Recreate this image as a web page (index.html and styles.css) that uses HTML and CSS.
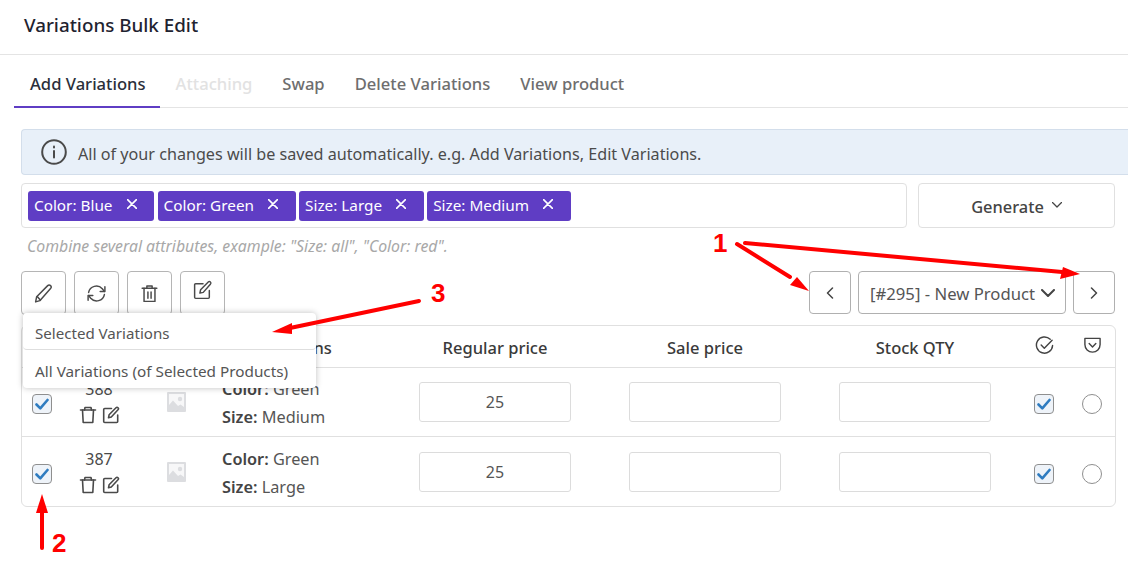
FILE: index.html
```html
<!DOCTYPE html>
<html lang="en">
<head>
<meta charset="utf-8">
<title>Variations Bulk Edit</title>
<link rel="stylesheet" href="styles.css">
</head>
<body>
<div class="page">
  <header class="title-bar"><h1>Variations Bulk Edit</h1></header>
  <nav class="tabs">
    <a class="tab active">Add Variations</a>
    <a class="tab disabled">Attaching</a>
    <a class="tab">Swap</a>
    <a class="tab">Delete Variations</a>
    <a class="tab">View product</a>
  </nav>
  <main class="content">
    <div class="notice">
      <svg class="notice-icon" viewBox="0 0 26 26"><circle cx="13" cy="13" r="11.800"/><path d="M13 12v6.500"/><path d="M13 7.500v1"/></svg>
      <span>All of your changes will be saved automatically. e.g. Add Variations, Edit Variations.</span>
    </div>
    <div class="generate-row">
      <div class="tag-input">
        <span class="tag">Color: Blue<svg viewBox="0 0 10 10"><path d="M0.5 0.5l9 9M9.500 0.5l-9 9"/></svg></span>
        <span class="tag">Color: Green<svg viewBox="0 0 10 10"><path d="M0.5 0.5l9 9M9.500 0.5l-9 9"/></svg></span>
        <span class="tag">Size: Large<svg viewBox="0 0 10 10"><path d="M0.5 0.5l9 9M9.500 0.5l-9 9"/></svg></span>
        <span class="tag">Size: Medium<svg viewBox="0 0 10 10"><path d="M0.5 0.5l9 9M9.500 0.5l-9 9"/></svg></span>
      </div>
      <button class="generate">Generate<svg viewBox="0 0 10 6"><path d="M0.500 0.500l4.500 4.500 4.500-4.500"/></svg></button>
    </div>
    <p class="hint">Combine several attributes, example: "Size: all", "Color: red".</p>
    <div class="toolbar">
      <div class="tools">
        <button class="tool"><svg viewBox="0 0 20 20"><path d="M2.500 18l1-5L14 2.500q1.300-1.300 2.700 0t0 2.700L6.500 16.800z"/><path d="M4 12.800l3 3.300"/></svg></button>
        <button class="tool"><svg viewBox="0 0 20 20"><path d="M2.500 9a7.500 7.500 0 0 1 13-3.500L17.500 8"/><path d="M18 3.500V8h-4.500"/><path d="M17.500 11a7.500 7.500 0 0 1-13 3.500L2.500 12"/><path d="M2 16.500V12h4.500"/></svg></button>
        <button class="tool"><svg viewBox="0 0 20 20"><path d="M3 5h14"/><path d="M7.500 5V2.800h5V5"/><path d="M4.800 5v12.500h10.400V5"/><path d="M8.500 8.500v6M11.500 8.500v6"/></svg></button>
        <button class="tool raised"><svg viewBox="0 0 20 20"><path d="M10.500 3.500H3.500a1 1 0 0 0-1 1v12a1 1 0 0 0 1 1h12a1 1 0 0 0 1-1V10"/><path d="M7.500 12.500l.7-3.200L15.500 2q1-1 2 0t0 2L10.700 11.800z"/></svg></button>
      </div>
      <div class="pager">
        <button class="page-btn"><svg viewBox="0 0 8 12"><path d="M6.500 1L1.500 6l5 5"/></svg></button>
        <button class="product-select">[#295] - New Product<svg viewBox="0 0 14 8"><path d="M1 1l6 6 6-6"/></svg></button>
        <button class="page-btn"><svg viewBox="0 0 8 12"><path d="M1.500 1l5 5-5 5"/></svg></button>
      </div>
    </div>
    <div class="table-wrap">
      <table class="grid">
        <colgroup>
          <col class="c-check"><col class="c-id"><col class="c-img"><col class="c-attr"><col class="c-price"><col class="c-sale"><col class="c-stock"><col class="c-on"><col class="c-def">
        </colgroup>
        <thead>
          <tr>
            <th></th><th></th><th></th>
            <th class="left">Combinations</th>
            <th>Regular price</th>
            <th>Sale price</th>
            <th>Stock QTY</th>
            <th><svg class="head-icon" viewBox="0 0 20 20"><path d="M16 3.500A8.500 8.500 0 1 0 18.500 10"/><path d="M6.500 9.500l3.300 3.300L18 4.500"/></svg></th>
            <th><svg class="head-icon" viewBox="0 0 20 20"><path d="M2 2.500h16V9a8 8 0 0 1-16 0z"/><path d="M6.500 8l3.500 3.500L13.500 8"/></svg></th>
          </tr>
        </thead>
        <tbody>
          <tr>
            <td><span class="check"><svg viewBox="0 0 14 12"><path d="M1.500 6.500l3.800 3.800L12.500 2"/></svg></span></td>
            <td class="id-cell">388<span class="row-icons"><svg viewBox="0 0 18 18"><path d="M1.500 4h15"/><path d="M5.500 4l.5-2.500h6L12.500 4"/><path d="M3.500 4l.7 12.500h9.600L14.500 4"/></svg><svg viewBox="0 0 18 18"><path d="M9.500 2.500H2.700a1 1 0 0 0-1 1v12a1 1 0 0 0 1 1h12a1 1 0 0 0 1-1V9"/><path d="M6.500 11.800l.6-3L14 1.800q1-1 2 0t0 2L9.300 11z"/></svg></span></td>
            <td class="img-cell"><svg class="ph" viewBox="0 0 19 20"><rect class="ph-frame" width="19" height="20" rx="1"/><rect class="ph-sky" x="2" y="2" width="15" height="16"/><circle class="ph-art" cx="13" cy="7" r="2.200"/><path class="ph-art" d="M2 18v-5l4-4.500 5 5.500 2.500-1.500 3.500 2.500V18z"/></svg></td>
            <td class="attr"><div><b>Color:</b> Green</div><div><b>Size:</b> Medium</div></td>
            <td><input class="field" type="text" value="25" readonly></td>
            <td><input class="field" type="text" readonly></td>
            <td><input class="field" type="text" readonly></td>
            <td><span class="check"><svg viewBox="0 0 14 12"><path d="M1.500 6.500l3.800 3.800L12.500 2"/></svg></span></td>
            <td><span class="radio"></span></td>
          </tr>
          <tr>
            <td><span class="check"><svg viewBox="0 0 14 12"><path d="M1.500 6.500l3.800 3.800L12.500 2"/></svg></span></td>
            <td class="id-cell">387<span class="row-icons"><svg viewBox="0 0 18 18"><path d="M1.500 4h15"/><path d="M5.500 4l.5-2.500h6L12.500 4"/><path d="M3.500 4l.7 12.500h9.600L14.500 4"/></svg><svg viewBox="0 0 18 18"><path d="M9.500 2.500H2.700a1 1 0 0 0-1 1v12a1 1 0 0 0 1 1h12a1 1 0 0 0 1-1V9"/><path d="M6.500 11.800l.6-3L14 1.800q1-1 2 0t0 2L9.300 11z"/></svg></span></td>
            <td class="img-cell"><svg class="ph" viewBox="0 0 19 20"><rect class="ph-frame" width="19" height="20" rx="1"/><rect class="ph-sky" x="2" y="2" width="15" height="16"/><circle class="ph-art" cx="13" cy="7" r="2.200"/><path class="ph-art" d="M2 18v-5l4-4.500 5 5.500 2.500-1.500 3.500 2.500V18z"/></svg></td>
            <td class="attr"><div><b>Color:</b> Green</div><div><b>Size:</b> Large</div></td>
            <td><input class="field" type="text" value="25" readonly></td>
            <td><input class="field" type="text" readonly></td>
            <td><input class="field" type="text" readonly></td>
            <td><span class="check"><svg viewBox="0 0 14 12"><path d="M1.500 6.500l3.800 3.800L12.500 2"/></svg></span></td>
            <td><span class="radio"></span></td>
          </tr>
        </tbody>
      </table>
    </div>
  </main>

  <ul class="menu">
    <li>Selected Variations</li>
    <li>All Variations (of Selected Products)</li>
  </ul>

  <svg class="marks" viewBox="0 0 1128 565">
    <path class="shaft" d="M737 244L790 277"/>
    <path class="head" d="M809 291L790 285 797 277z"/>
    <path class="shaft" d="M745 243L1062 272"/>
    <path class="head" d="M1080 274L1060 279 1063 267z"/>
    <path class="shaft" d="M419 301L290 328"/>
    <path class="head" d="M272 332L292 323 292 334z"/>
    <path class="shaft" d="M42 548V508"/>
    <path class="head" d="M42 494L48 513H36z"/>
  </svg>
  <span class="num n1">1</span>
  <span class="num n2">2</span>
  <span class="num n3">3</span>
</div>
</body>
</html>
```
FILE: styles.css
```css
* { box-sizing: border-box; }
html, body { margin: 0; padding: 0; background: #fff; }
body { font-family: "Noto Sans", "Open Sans", sans-serif; color: #444; font-size: 16px; }
.page { position: relative; width: 1128px; height: 565px; overflow: hidden; }
svg { fill: none; stroke: currentColor; stroke-linecap: round; stroke-linejoin: round; }

.title-bar { height: 55px; border-bottom: 1px solid #e4e4e4; padding-left: 24px; display: flex; align-items: center; }
.title-bar h1 { margin: 0 0 5px; font-size: 18.8px; font-weight: 500; color: #1f2330; }

.tabs { height: 53px; margin-left: 14px; border-bottom: 1px solid #e4e4e4; display: flex; }
.tab { padding: 0 15px; line-height: 58px; height: 53px; font-weight: 500; font-size: 16.6px; color: #6e6e6e; white-space: nowrap; }
.tab.active { color: #2b2f3a; border-bottom: 2px solid #5f3dc4; padding: 0 14px 0 16px; margin-right: 1px; }
.tab.disabled { color: #e2e2e2; }

.content { padding: 21px 13px 0 21px; }
.notice { height: 46px; width: 1107px; background: #e8f0f9; border: 1px solid #d3deeb; border-right: 0; border-radius: 4px 0 0 4px; display: flex; align-items: center; padding-left: 19px; gap: 11px; font-size: 16.15px; color: #4b4b4b; }
.notice span { padding-top: 3px; }
.notice-icon { width: 26px; height: 26px; stroke-width: 2; color: #4a4a4a; flex: none; }

.generate-row { display: flex; gap: 11px; margin-top: 8px; width: 1094px; }
.tag-input { width: 886px; height: 45px; border: 1px solid #e0e0e0; border-radius: 4px; padding: 7px 6px; display: flex; gap: 3.5px; }
.tag { height: 30px; background: #5f3dc4; color: #fff; border-radius: 3px; display: inline-flex; align-items: center; padding: 0 0 3px 6px; font-size: 15.300px; gap: 14px; white-space: nowrap; }
.tag svg { width: 10px; height: 10px; stroke-width: 1.6; margin: 0 17.6px 1px 0; color: #fff; }
.generate { flex: 1; height: 45px; background: #fff; border: 1px solid #e0e0e0; border-radius: 4px; font: 500 16.4px "Noto Sans", sans-serif; color: #444; display: flex; align-items: center; justify-content: center; gap: 8px; padding: 2px 0 0; }
.generate svg { width: 10px; height: 6px; stroke-width: 1.3; margin-bottom: 4px; }

.hint { margin: 8px 0 0 6px; height: 20px; line-height: 20px; font-size: 15.8px; font-style: italic; color: #a8a8a8; white-space: nowrap; }

.toolbar { display: flex; justify-content: space-between; margin-top: 15px; width: 1094px; height: 54px; }
.tools { display: flex; gap: 8px; align-items: flex-start; }
.tool { width: 45px; height: 44px; background: #fff; border: 1px solid #b5b5b5; border-radius: 4px; padding: 0; display: flex; align-items: center; justify-content: center; color: #4a4a4a; }
.tool svg { width: 21px; height: 21px; stroke-width: 1.4; }
.tool.raised svg { margin-bottom: 6px; }
.pager { display: flex; gap: 7px; align-items: flex-start; }
.page-btn { width: 42px; height: 43px; background: #fff; border: 1px solid #b0b0b0; border-radius: 4px; padding: 0; display: flex; align-items: center; justify-content: center; color: #444; }
.page-btn svg { width: 8px; height: 12px; stroke-width: 1.5; }
.product-select { width: 208px; height: 43px; background: #fff; border: 1px solid #b0b0b0; border-radius: 4px; font: 400 16.7px "Noto Sans", sans-serif; color: #555; padding: 2px 10px 0 11px; display: flex; align-items: center; justify-content: space-between; white-space: nowrap; }
.product-select svg { width: 14px; height: 8px; stroke-width: 2; color: #444; flex: none; margin-bottom: 2px; }

.table-wrap { width: 1095px; border: 1px solid #e0e0e0; border-radius: 6px; overflow: hidden; }
.grid { border-collapse: collapse; table-layout: fixed; width: 100%; }
.c-check { width: 40px; } .c-id { width: 74px; } .c-img { width: 80px; } .c-attr { width: 178px; }
.c-price { width: 202px; } .c-sale { width: 218px; } .c-stock { width: 202px; } .c-on { width: 56px; } .c-def { width: 43px; }
th { height: 41px; font-weight: 500; font-size: 16.5px; color: #3a3a3a; border-bottom: 1px solid #e0e0e0; padding: 2px 0 0; text-align: center; }
th.left { text-align: left; padding-left: 6px; }
th:last-child, td:last-child { padding-right: 3px; }
td { height: 69px; text-align: center; padding: 0; border-bottom: 1px solid #e0e0e0; vertical-align: middle; }
tbody tr:last-child td { border-bottom: 0; height: 70px; padding-top: 1px; }
.head-icon { width: 19px; height: 19px; stroke-width: 1.5; color: #444; display: block; margin: 0 auto 4px; }
.check { display: inline-flex; width: 20px; height: 20px; align-items: center; justify-content: center; border: 1px solid #8f8f8f; border-radius: 4px; background: #eef3f9; vertical-align: middle; margin-top: 4px; }
.check svg { width: 14px; height: 12px; stroke-width: 2.6; color: #2f7cc0; }
.radio { display: inline-block; width: 20px; height: 20px; border: 1px solid #8f8f8f; border-radius: 50%; background: #fff; vertical-align: middle; margin-top: 4px; }
td.id-cell { font-size: 16px; color: #4a4a4a; line-height: 26px; padding-bottom: 3px; }
.row-icons { display: flex; gap: 5px; justify-content: center; padding: 4px 0 0 1px; color: #4a4a4a; }
.row-icons svg { width: 18px; height: 18px; stroke-width: 1.6; }
.ph { width: 19px; height: 20px; display: block; margin: 0 auto; stroke: none; }
.ph-frame { fill: #dcdde0; }
.ph-sky { fill: #f7f7f8; }
.ph-art { fill: #dcdde0; }
td.attr { text-align: left; padding: 2px 0 0 6px; line-height: 28px; color: #555; font-size: 16.3px; }
tbody tr:last-child td.attr { padding-top: 4px; }
.attr b { font-weight: 600; color: #444; }
.field { width: 152px; height: 40px; border: 1px solid #dcdcdc; border-radius: 3px; text-align: center; font: 400 16px "Noto Sans", sans-serif; color: #555; padding: 0; background: #fff; outline: 0; }

.menu { position: absolute; left: 23px; top: 313px; width: 293px; margin: 0; padding: 0; list-style: none; background: #fff; border-radius: 4px; box-shadow: 0 0 6px rgba(0,0,0,.25); }
.menu li { height: 38px; line-height: 42px; padding-left: 12px; font-size: 15.3px; color: #555; white-space: nowrap; }
.menu li:first-child { border-bottom: 1px solid #dedede; height: 37px; line-height: 40px; border-radius: 0 0 4px 4px; font-size: 15.100px; }

.marks { position: absolute; left: 0; top: 0; width: 1128px; height: 565px; pointer-events: none; }
.shaft { stroke: #f00; stroke-width: 4; fill: none; }
.head { fill: #f00; stroke: none; }
.num { position: absolute; font: 700 26px "Liberation Sans", Arial, sans-serif; color: #f00; line-height: 28px; }
.n1 { left: 713px; top: 229px; }
.n2 { left: 52px; top: 529px; }
.n3 { left: 431px; top: 279px; }
```
